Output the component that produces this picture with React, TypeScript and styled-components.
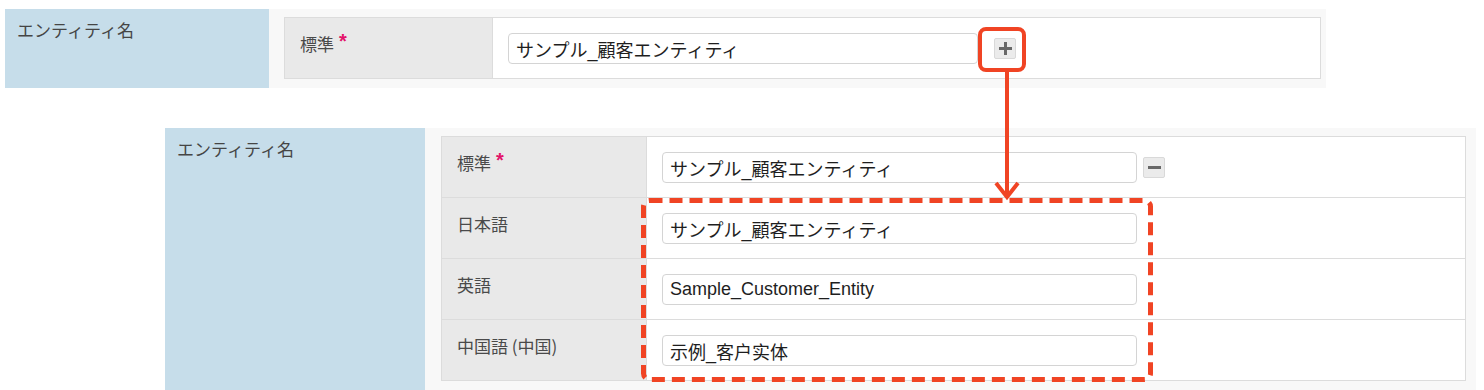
import React from 'react';
import styled, { createGlobalStyle } from 'styled-components';

const GlobalStyle = createGlobalStyle`
  body {
    margin: 0;
    background: #fff;
    font-family: "Liberation Sans", "Noto Sans CJK JP", sans-serif;
  }
`;

const Page = styled('div')`
  position: relative;
  width: 1484px;
  height: 390px;
  overflow: hidden;
  padding-top: 9px;
  box-sizing: border-box;
  display: flex;
  flex-direction: column;
  gap: 40px;
`;

const Section = styled('div')<{ $left: number }>`
  display: flex;
  margin-left: ${(p) => p.$left}px;
`;

const EntityLabel = styled('div')<{ $width: number }>`
  width: ${(p) => p.$width}px;
  flex-shrink: 0;
  background: #c6ddea;
  color: #454545;
  font-family: "Noto Sans CJK JP", sans-serif;
  font-size: 17px;
  line-height: 24px;
  padding: 9px 12px;
  box-sizing: border-box;
`;

const FieldArea = styled('div')<{ $width: number; $padLeft: number; $padRight: number }>`
  width: ${(p) => p.$width}px;
  background: #f8f8f8;
  padding: 8px ${(p) => p.$padRight}px 9px ${(p) => p.$padLeft}px;
  box-sizing: border-box;
`;

const Table = styled('div')`
  border: 1px solid #dcdcdc;
  background: #fff;
`;

const Row = styled('div')<{ $labelWidth: number }>`
  display: grid;
  grid-template-columns: ${(p) => p.$labelWidth}px 1fr;
  & + & {
    border-top: 1px solid #dcdcdc;
  }
`;

const LabelCell = styled('div')`
  background: #e9e9e9;
  border-right: 1px solid #dcdcdc;
  color: #4a4a4a;
  font-family: "Noto Sans CJK JP", sans-serif;
  font-size: 17px;
  line-height: 24px;
  padding: 14px 15px;
`;

const Required = styled('span')`
  color: #e3136a;
  font-family: "Liberation Sans", sans-serif;
  font-weight: bold;
  font-size: 20px;
  line-height: 10px;
  vertical-align: top;
  margin-left: 5px;
  position: relative;
  top: 4px;
`;

const ValueCell = styled('div')<{ $gap: number }>`
  display: flex;
  align-items: center;
  gap: ${(p) => p.$gap}px;
  padding: 15px 15px 14px;
`;

const TextInput = styled('div')<{ $width: number }>`
  width: ${(p) => p.$width}px;
  height: 31px;
  box-sizing: border-box;
  border: 1px solid #d4d4d4;
  border-radius: 4px;
  padding: 0 7px;
  display: flex;
  align-items: center;
  font-family: "Liberation Sans", "Noto Sans CJK JP", "Noto Sans CJK SC", sans-serif;
  font-size: 18px;
  color: #1e1e1e;
  white-space: nowrap;
`;

const IconButton = styled('div')`
  width: 22px;
  height: 21px;
  box-sizing: border-box;
  background: #ebebeb;
  border: 1px solid #d9d9d9;
  border-radius: 2px;
  display: flex;
  align-items: center;
  justify-content: center;
`;

const Overlay = styled('svg')`
  position: absolute;
  left: 0;
  top: 0;
  pointer-events: none;
`;

const PlusIcon = () => (
  <svg width="15" height="15" viewBox="0 0 15 15">
    <path d="M7.5 1v13M1 7.5h13" stroke="#686868" strokeWidth="3" />
  </svg>
);

const MinusIcon = () => (
  <svg width="15" height="15" viewBox="0 0 15 15">
    <path d="M1 7.5h13" stroke="#686868" strokeWidth="3" />
  </svg>
);

type Field = { label: string; value: string; required?: boolean; button?: 'plus' | 'minus' };

const FieldRow = ({
  field,
  labelWidth,
  inputWidth,
  gap,
}: {
  field: Field;
  labelWidth: number;
  inputWidth: number;
  gap: number;
}) => (
  <Row $labelWidth={labelWidth}>
    <LabelCell>
      {field.label}
      {field.required && <Required>*</Required>}
    </LabelCell>
    <ValueCell $gap={gap}>
      <TextInput $width={inputWidth}>{field.value}</TextInput>
      {field.button && (
        <IconButton>{field.button === 'plus' ? <PlusIcon /> : <MinusIcon />}</IconButton>
      )}
    </ValueCell>
  </Row>
);

const expanded: Field[] = [
  { label: '標準', value: 'サンプル_顧客エンティティ', required: true, button: 'minus' },
  { label: '日本語', value: 'サンプル_顧客エンティティ' },
  { label: '英語', value: 'Sample_Customer_Entity' },
  { label: '中国語 (中国)', value: '示例_客户实体' },
];

function App() {
  return (
    <Page>
      <GlobalStyle />
      <Section $left={5}>
        <EntityLabel $width={264}>エンティティ名</EntityLabel>
        <FieldArea $width={1057} $padLeft={15} $padRight={5}>
          <Table>
            <FieldRow
              field={{ label: '標準', value: 'サンプル_顧客エンティティ', required: true, button: 'plus' }}
              labelWidth={208}
              inputWidth={470}
              gap={16}
            />
          </Table>
        </FieldArea>
      </Section>
      <Section $left={165}>
        <EntityLabel $width={260}>エンティティ名</EntityLabel>
        <FieldArea $width={1051} $padLeft={16} $padRight={10}>
          <Table>
            {expanded.map((f) => (
              <FieldRow key={f.label} field={f} labelWidth={205} inputWidth={475} gap={6} />
            ))}
          </Table>
        </FieldArea>
      </Section>

      {/* callout annotations */}
      <Overlay width="1484" height="390" viewBox="0 0 1484 390">
        <rect x="980" y="29" width="44" height="41" rx="6" fill="none" stroke="#f04424" strokeWidth="4" />
        <path d="M1007 71V197" stroke="#f04424" strokeWidth="4" />
        <path d="M996 183L1007 197L1018 183" fill="none" stroke="#f04424" strokeWidth="4" strokeLinejoin="miter" />
        <rect
          x="643.5"
          y="200.5"
          width="507"
          height="179"
          rx="6"
          fill="none"
          stroke="#f04424"
          strokeWidth="5"
          strokeDasharray="13 7"
        />
      </Overlay>
    </Page>
  );
}

export default App;
